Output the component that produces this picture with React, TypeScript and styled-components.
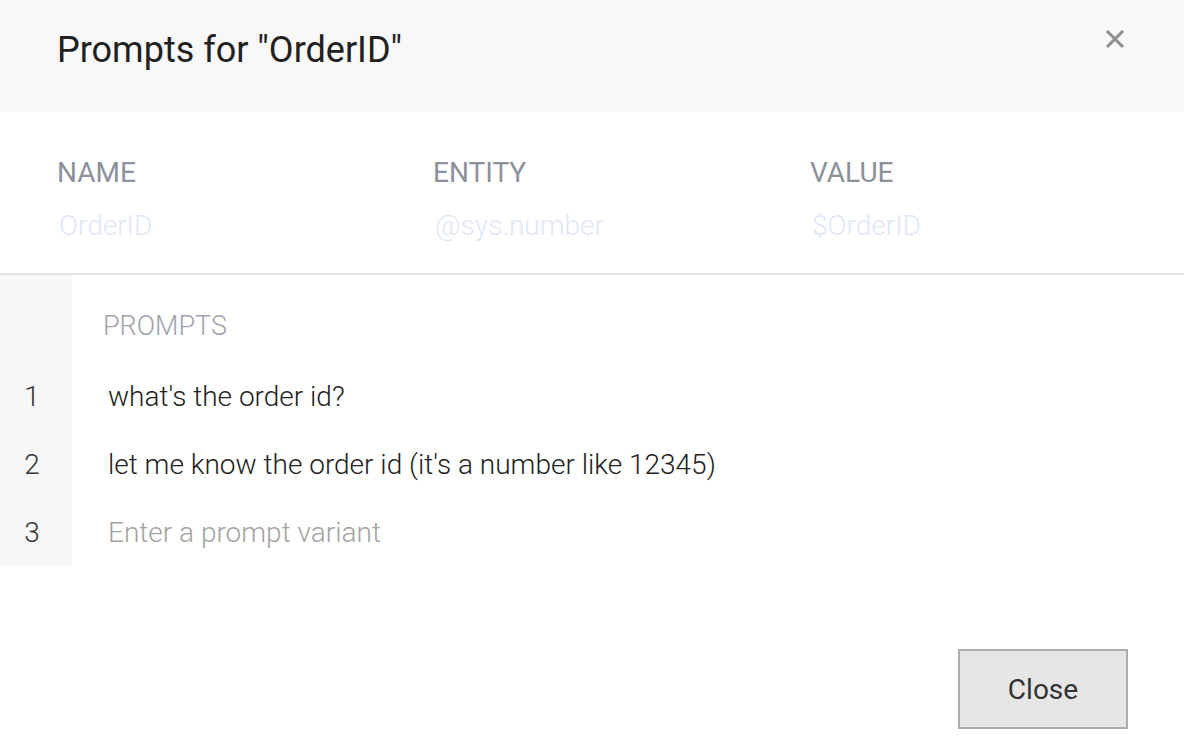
import React from "react";
import styled, { createGlobalStyle } from "styled-components";

const Global = createGlobalStyle`
  html, body { margin: 0; padding: 0; background: #ffffff; }
  body { font-family: Roboto, "Noto Sans", sans-serif; }
  * { box-sizing: border-box; }
`;

const Dialog = styled.div`
  width: 1184px;
  height: 752px;
  background: #ffffff;
  display: flex;
  flex-direction: column;
`;

const Header = styled.div`
  height: 112px;
  flex: none;
  background: #f8f8f8;
  display: flex;
  align-items: flex-start;
  justify-content: space-between;
  padding: 29px 57px 0 57px;
`;

const Title = styled.h1`
  margin: 0;
  font-size: 36px;
  font-weight: 400;
  color: #212121;
  line-height: 42px;
`;

const CloseX = styled.button`
  border: none;
  background: transparent;
  padding: 0;
  margin-top: -2px;
  width: 24px;
  height: 24px;
  display: flex;
  align-items: center;
  justify-content: center;
  cursor: pointer;
`;

const Meta = styled.div`
  flex: none;
  display: grid;
  grid-template-columns: 376px 377px 1fr;
  padding: 45px 57px 0 57px;
  height: 163px;
  border-bottom: 2px solid #e3e3e3;
`;

const Field = styled.div`
  display: flex;
  flex-direction: column;
`;

const FieldLabel = styled.div`
  font-size: 28px;
  line-height: 32px;
  color: #8c919b;
  font-weight: 400;
`;

const FieldValue = styled.div`
  margin-top: 21px;
  padding-left: 2px;
  font-size: 28px;
  line-height: 32px;
  color: #e0e7f8;
  font-weight: 300;
`;

const PromptArea = styled.div`
  display: grid;
  grid-template-columns: 72px 1fr;
`;

const Gutter = styled.div`
  background: #f7f7f7;
`;

const PromptsLabel = styled.div`
  font-size: 27px;
  line-height: 32px;
  color: #9ea3ad;
  font-weight: 300;
  padding: 35px 0 0 31px;
  height: 87px;
`;

const NumCell = styled.div`
  background: #f7f7f7;
  font-size: 28px;
  font-weight: 300;
  color: #333333;
  height: 68px;
  display: flex;
  align-items: center;
  justify-content: center;
  padding-right: 8px;
`;

const TextCell = styled.div<{ $placeholder?: boolean }>`
  height: 68px;
  display: flex;
  align-items: center;
  padding-left: 36px;
  font-size: 28px;
  font-weight: 300;
  color: ${(p) => (p.$placeholder ? "#a3a3a3" : "#222222")};
`;

const Footer = styled.div`
  flex: 1;
  display: flex;
  justify-content: flex-end;
  align-items: flex-start;
  padding: 83px 56px 0 0;
`;

const CloseButton = styled.button`
  width: 170px;
  height: 80px;
  background: #e6e6e6;
  border: 2px solid #acacac;
  font-family: Roboto, "Noto Sans", sans-serif;
  font-size: 28px;
  font-weight: 400;
  color: #333333;
  cursor: pointer;
`;

const prompts = [
  { text: "what's the order id?", placeholder: false },
  { text: "let me know the order id (it's a number like 12345)", placeholder: false },
  { text: "Enter a prompt variant", placeholder: true },
];

export default function App() {
  return (
    <>
      <Global />
      <Dialog>
        <Header>
          <Title>Prompts for "OrderID"</Title>
          <CloseX aria-label="close">
            <svg width="20" height="20" viewBox="0 0 20 20">
              <path d="M2 2 L18 18 M18 2 L2 18" stroke="#8e8e8e" strokeWidth="3" />
            </svg>
          </CloseX>
        </Header>
        <Meta>
          <Field>
            <FieldLabel>NAME</FieldLabel>
            <FieldValue>OrderID</FieldValue>
          </Field>
          <Field>
            <FieldLabel>ENTITY</FieldLabel>
            <FieldValue>@sys.number</FieldValue>
          </Field>
          <Field>
            <FieldLabel>VALUE</FieldLabel>
            <FieldValue>$OrderID</FieldValue>
          </Field>
        </Meta>
        <PromptArea>
          <Gutter />
          <PromptsLabel>PROMPTS</PromptsLabel>
          {prompts.map((p, i) => (
            <React.Fragment key={i}>
              <NumCell>{i + 1}</NumCell>
              <TextCell $placeholder={p.placeholder}>{p.text}</TextCell>
            </React.Fragment>
          ))}
        </PromptArea>
        <Footer>
          <CloseButton>Close</CloseButton>
        </Footer>
      </Dialog>
    </>
  );
}
